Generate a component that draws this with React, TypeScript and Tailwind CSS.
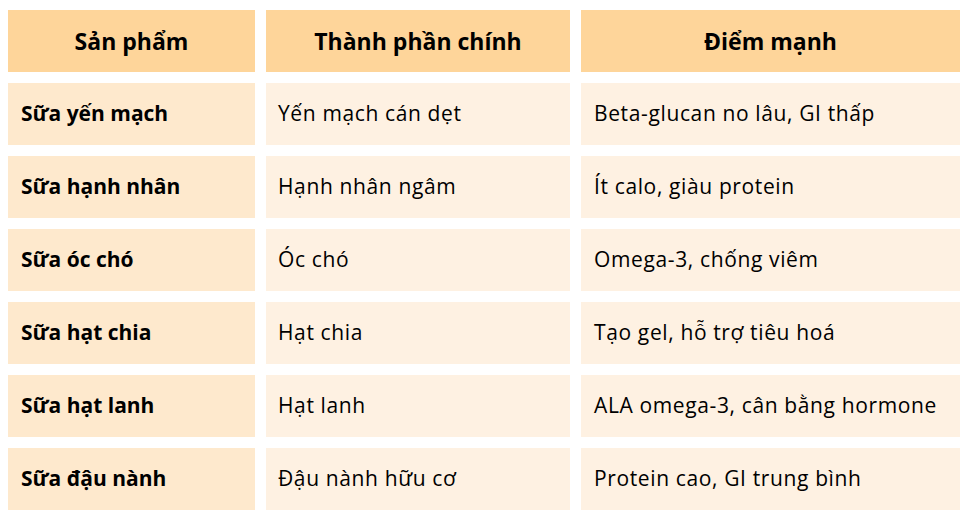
import React from 'react';

interface Row {
  product: string; // Product name (bold first column)
  ingredient: string; // Main ingredient
  strength: string; // Key benefit
}

const rows: Row[] = [
  { product: 'Sữa yến mạch', ingredient: 'Yến mạch cán dẹt', strength: 'Beta-glucan no lâu, GI thấp' },
  { product: 'Sữa hạnh nhân', ingredient: 'Hạnh nhân ngâm', strength: 'Ít calo, giàu protein' },
  { product: 'Sữa óc chó', ingredient: 'Óc chó', strength: 'Omega-3, chống viêm' },
  { product: 'Sữa hạt chia', ingredient: 'Hạt chia', strength: 'Tạo gel, hỗ trợ tiêu hoá' },
  { product: 'Sữa hạt lanh', ingredient: 'Hạt lanh', strength: 'ALA omega-3, cân bằng hormone' },
  { product: 'Sữa đậu nành', ingredient: 'Đậu nành hữu cơ', strength: 'Protein cao, GI trung bình' },
];

const headers = ['Sản phẩm', 'Thành phần chính', 'Điểm mạnh'];

const App: React.FC = () => {
  return (
    <div className="bg-white w-[968px] h-[517px] pt-[10px] pl-[8px] font-['Open_Sans',_'Noto_Sans',_sans-serif] text-black">
      <div className="grid grid-cols-[247px_304px_379px] auto-rows-[62px] gap-x-[11px] gap-y-[11px]">
        {/* Header row */}
        {headers.map((h) => (
          <div key={h} className="bg-[#fed59a] flex items-center justify-center text-[23px] font-bold">
            {h}
          </div>
        ))}

        {/* Data rows */}
        {rows.map((r) => (
          <React.Fragment key={r.product}>
            <div className="bg-[#fee9cd] flex items-center pl-[13px] text-[21px] font-bold">{r.product}</div>
            <div className="bg-[#fef1e2] flex items-center pl-[12px] text-[21px] tracking-[0.03em]">{r.ingredient}</div>
            <div className="bg-[#fef1e2] flex items-center pl-[13px] text-[21px] tracking-[0.03em]">{r.strength}</div>
          </React.Fragment>
        ))}
      </div>
    </div>
  );
};

export default App;
